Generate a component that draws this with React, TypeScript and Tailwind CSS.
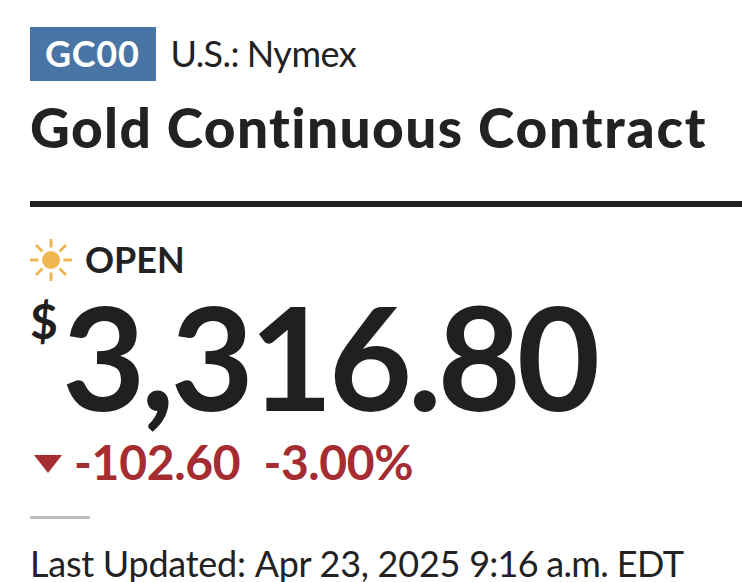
function SunIcon() {
  return (
    <svg
      viewBox="0 0 42 42"
      className="h-[42px] w-[42px] text-[#efb752]"
      fill="none"
      stroke="currentColor"
      strokeWidth="3"
    >
      <circle cx="21" cy="21" r="9" fill="currentColor" stroke="none" />
      <path d="M21 0v8.5M21 33.5V42M0 21h8.5M33.5 21H42M6 6l6.500 6.500M29.500 29.500l6.500 6.500M6 36l6.500-6.500M29.500 12.500L36 6" />
    </svg>
  )
}

export default function App() {
  return (
    <main className="h-[582px] w-[742px] overflow-hidden bg-white pt-[27px] pl-[30px] font-['Lato',sans-serif] whitespace-nowrap text-[#222]">
      <div className="flex h-[54px] items-center text-[36px]">
        <span className="flex h-[54px] w-[126px] items-center bg-[#4875a6] pb-[3px] pl-[15px] font-bold tracking-[0.7px] text-white">
          GC00
        </span>
        <span className="ml-[14.5px] flex gap-[8px] pb-[3px]">
          <span className="tracking-[-0.6px]">U.S.:</span>
          <span className="tracking-[-0.5px]">Nymex</span>
        </span>
      </div>
      <h1 className="mt-[10px] h-[72px] text-[55px] leading-[72px] font-black tracking-[1.4px]">
        Gold Continuous <span className="tracking-[1.8px]">Contract</span>
      </h1>
      <hr className="mt-[38px] border-t-[6px] border-[#202020]" />
      <div className="mt-[32px] flex h-[42px] items-center text-[36px] font-bold">
        <SunIcon />
        <span className="ml-[13px] pb-[2px] leading-[40px]">OPEN</span>
      </div>
      <div className="mt-[13px] flex h-[144px] font-bold text-[#202020]">
        <sup className="top-0 mt-[3px] w-[32px] text-[48px] leading-[48px]">$</sup>
        <span className="mt-[-10px] text-[144px] leading-[144px] tracking-[-4.4px]">3,316.80</span>
      </div>
      <div className="flex h-[60px] items-center text-[48px] leading-[50px] font-bold text-[#a52c30]">
        <svg viewBox="0 0 28 18" className="ml-[4px] mt-[-8px] h-[18px] w-[28px]" fill="currentColor">
          <path d="M0 0h28L14 18z" />
        </svg>
        <span className="ml-[12px] pb-[12px] tracking-[-0.3px]">-102.60</span>
        <span className="ml-[23px] pb-[12px] tracking-[-0.4px]">-3.00%</span>
      </div>
      <div className="mt-[18px] h-[3px] w-[60px] bg-[#bfbfbf]" />
      <p className="mt-[22px] text-[36px] leading-[44px]">
        <span className="tracking-[-0.25px]">Last Updated: </span>
        <span className="tracking-[-0.3px]">Apr 23, </span>
        <span className="tracking-[-0.2px]">2025 </span>
        <span className="tracking-[-0.8px]">9:16 </span>
        <span className="tracking-[-0.6px]">a.m. EDT</span>
      </p>
    </main>
  )
}
